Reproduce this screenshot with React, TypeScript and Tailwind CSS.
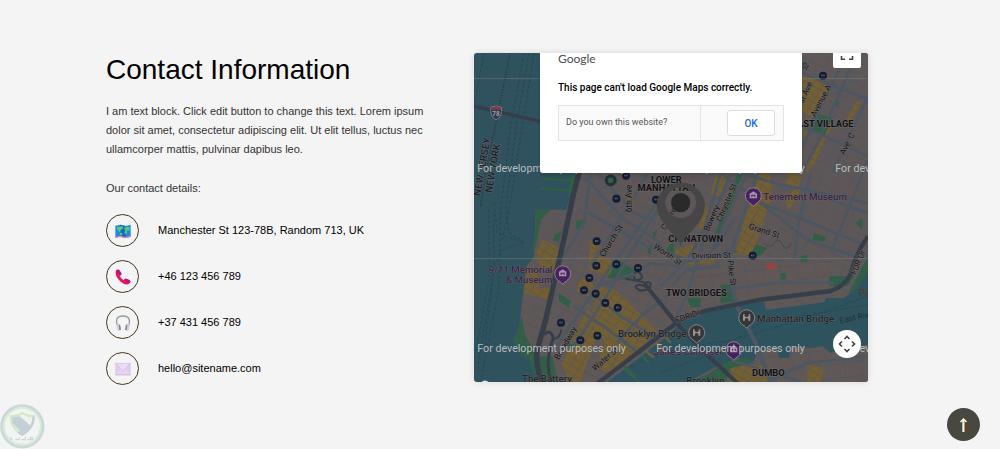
import React from "react";

const transitStops: [number, number][] = [
  [427, 437], [456, 368], [546, 440], [368, 565], [367, 638], [427, 634],
  [492, 645], [346, 675], [330, 712], [365, 722], [394, 750], [431, 764],
  [261, 809], [319, 862], [370, 848], [1047, 68], [836, 608],
];

const majorStreets = [
  "M240,890 L370,700 L600,375 L640,300",
  "M300,880 L400,725 L470,600 L560,455 L620,360",
  "M350,640 L500,400 L520,360",
  "M250,640 L330,510 L350,360",
  "M345,480 L520,580 L580,600 L640,620",
  "M335,375 L450,500 L560,570",
  "M370,360 L480,480 L540,500",
  "M370,700 L480,660 L530,630 L610,640",
  "M600,815 L640,720 L690,560 L770,360",
  "M560,700 L640,620 L690,530 L740,360",
  "M640,625 L760,603 L790,595",
  "M600,690 L640,650 L740,640",
  "M700,620 L820,360",
  "M770,600 L850,360",
  "M740,360 L860,450 L1000,505 L1182,580",
  "M800,360 L900,390 L1182,450",
  "M860,450 L1000,560 L1140,610 L1182,610",
  "M985,360 L1040,250 L1150,0",
  "M985,280 L1120,0",
  "M985,60 L1182,140",
  "M1075,360 L1182,130",
  "M985,220 L1182,310",
  "M985,410 L1182,480",
  "M960,620 L975,500 L1010,360",
  "M620,725 L700,720 L900,690 L1080,690",
  "M720,590 L780,500",
  "M1070,600 L1110,500 L1182,320",
  "M430,870 L500,790 L590,720",
  "M300,760 L390,820 L500,905",
  "M340,710 L440,790 L540,850",
  "M700,905 L800,930 L980,987",
  "M880,987 L1000,930 L1182,910",
];

const yellowBlocks = [
  "M205,560 L270,590 L255,655 L195,640 L187,600 Z",
  "M158,645 L190,650 L195,705 L242,705 L222,740 L150,720 Z",
  "M310,690 L340,665 L360,700 L345,730 L312,715 Z",
  "M380,700 L425,710 L485,770 L550,835 L480,900 L405,960 L370,945 L390,860 L345,800 Z",
  "M340,765 L380,830 L350,900 L320,985 L285,985 L262,930 L300,850 Z",
  "M345,598 L420,625 L410,670 L345,650 Z",
  "M605,590 L665,570 L650,612 L600,610 Z",
  "M640,626 L720,616 L720,628 L650,636 Z",
  "M855,362 L888,362 L895,430 L835,606 L782,606 L815,490 Z",
  "M980,70 L1060,80 L1065,130 L1020,195 L985,180 Z",
  "M985,200 L1010,215 L990,280 Z",
  "M940,362 L985,362 L975,400 L930,400 Z",
  "M725,364 L772,364 L745,430 L710,425 Z",
  "M695,460 L715,470 L690,530 L672,525 Z",
  "M1110,210 L1150,140 L1160,150 L1120,220 Z",
  "M460,440 L490,415 L475,458 Z",
  "M345,560 L390,590 L350,600 Z",
  "M935,440 L970,400 L980,412 L945,480 Z",
  "M770,940 L870,935 L880,987 L770,987 Z",
  "M1000,935 L1050,945 L1040,987 L1000,987 Z",
  "M1060,205 L1078,213 L1000,360 L988,350 Z",
  "M1025,290 L1038,296 L1020,335 L1008,330 Z",
];

const greenBlocks = [
  "M185,470 L230,470 L200,500 L190,560 L180,600 L175,590 L184,530 Z",
  "M205,372 L300,380 L300,388 L210,382 Z",
  "M198,404 L290,408 L290,416 L198,410 Z",
  "M306,362 L292,430 L284,430 L292,362 Z",
  "M142,790 L155,850 L190,910 L235,910 L250,987 L185,987 L165,920 L135,900 L122,860 Z",
  "M400,675 L430,620 L490,655 L465,680 Z",
  "M305,505 L328,500 L328,528 L308,530 Z",
  "M395,370 L425,368 L432,390 L405,400 L392,390 Z",
  "M240,545 L262,535 L255,568 L238,562 Z",
  "M790,362 L806,362 L740,545 L724,540 Z",
  "M585,575 L600,570 L600,603 L575,598 Z",
  "M535,540 L550,530 L540,560 Z",
  "M520,590 L535,570 L528,610 Z",
  "M1022,180 L1075,195 L1050,250 L1005,225 Z",
  "M845,575 L880,585 L860,607 L825,612 Z",
  "M1020,540 L1055,552 L1050,567 L1015,560 Z",
  "M980,610 L1000,605 L1000,625 L980,628 Z",
  "M1065,670 L1140,670 L1120,700 L1065,698 Z",
  "M1160,650 L1182,610 L1182,655 L1145,710 L1125,720 Z",
  "M740,695 L775,695 L780,745 L740,750 Z",
  "M640,735 L680,735 L680,762 L650,762 Z",
  "M920,660 L935,660 L935,680 L920,680 Z",
  "M1085,140 L1095,148 L1088,160 L1080,155 Z",
  "M1130,200 L1140,208 L1130,220 Z",
  "M255,720 L290,745 L285,765 L255,745 Z",
  "M640,987 L700,965 L760,925 L820,915 L840,930 L770,945 L755,987 Z",
  "M1100,880 L1170,885 L1155,898 L1100,895 Z",
  "M280,870 L305,875 L300,890 L285,888 Z",
  "M1145,510 L1165,495 L1165,530 Z",
];

const MANHATTAN =
  "M330,0 L305,370 L277,470 L185,470 L180,610 L158,640 L145,740 L135,830 L120,860 L140,900 L170,915 L185,987 L400,987 L560,865 L640,795 L690,776 L870,745 L876,771 L1050,748 L1055,735 L1110,735 L1142,710 L1165,660 L1182,645 L1182,0 Z";
const BROOKLYN =
  "M640,987 L720,945 L790,915 L840,925 L850,890 L910,885 L915,915 L945,915 L950,880 L1010,885 L1045,880 L1070,900 L1120,885 L1182,875 L1182,987 Z";
const TWO_BRIDGES = "M640,640 L1060,620 L1060,700 L870,745 L690,775 L620,760 Z";

function StreetGrid() {
  return (
    <>
      <path d={MANHATTAN} fill="url(#blocks)" />
      <path d={TWO_BRIDGES} fill="#605757" />
      <path d={TWO_BRIDGES} fill="url(#wideBlocks)" />
      <path d={BROOKLYN} fill="url(#wideBlocks)" />
    </>
  );
}

type PinProps = { x: number; y: number; color: string; bridge?: boolean };

function Pin({ x, y, color, bridge }: PinProps) {
  return (
    <g transform={`translate(${x} ${y})`}>
      <path
        d="M0,33 C-4,27 -9,25 -15,20 A24,24 0 1 1 15,20 C9,25 4,27 0,33 Z"
        fill={color}
        stroke="#8b8389"
        strokeWidth="3"
      />
      {bridge ? (
        <path d="M-11,10 V-9 H-6 V-4 Q0,2 6,-4 V-9 H11 V10 H5 V5 Q0,-1 -5,5 V10 Z" fill="#98928f" />
      ) : (
        <path
          d="M-11,-5 L0,-12 L11,-5 V9 H-11 Z M-6,-2 V5 H-3 V1 H3 V5 H6 V-2 Z"
          fill="#a692ab"
          fillRule="evenodd"
        />
      )}
    </g>
  );
}

type StreetNameProps = { x: number; y: number; angle: number; children: React.ReactNode };

function StreetName({ x, y, angle, children }: StreetNameProps) {
  return (
    <text
      transform={`translate(${x} ${y}) rotate(${angle})`}
      fontSize="25"
      fill="#0f1113"
      stroke="#6f6868"
      strokeWidth="3"
      paintOrder="stroke"
      textAnchor="middle"
      dominantBaseline="central"
    >
      {children}
    </text>
  );
}

function CityMap() {
  return (
    <svg
      viewBox="0 0 1182 987"
      className="block w-full font-[Roboto,sans-serif]"
      role="img"
      aria-label="Map of Lower Manhattan"
    >
      <defs>
        <pattern id="blocks" width="44" height="29" patternUnits="userSpaceOnUse" patternTransform="rotate(25)">
          <path d="M0,0 H44 M0,0 V29" stroke="#4c5762" strokeWidth="4" fill="none" />
        </pattern>
        <pattern id="wideBlocks" width="52" height="44" patternUnits="userSpaceOnUse" patternTransform="rotate(-7)">
          <path d="M0,0 H52 M0,0 V44" stroke="#4c5762" strokeWidth="4" fill="none" />
        </pattern>
        <pattern id="lots" width="27" height="21" patternUnits="userSpaceOnUse" patternTransform="rotate(31)">
          <path d="M0,0 H27 M0,0 V21" stroke="#565856" strokeWidth="5" fill="none" />
        </pattern>
        <clipPath id="land">
          <path d={`${MANHATTAN} ${BROOKLYN}`} />
        </clipPath>
      </defs>

      <rect width="1182" height="987" fill="#2f535e" />

      {/* Ferry routes and the state boundary */}
      <g fill="none" stroke="#23434e" strokeWidth="2" strokeDasharray="10 6">
        <path d="M30,0 L0,160 M150,0 L110,220 L80,470 L75,700 L20,987" />
        <path d="M165,0 L125,230 L95,470 L105,540 L150,565 M180,0 L145,220 L105,470 L85,560" />
        <path d="M60,450 L70,540 L150,570 L85,590 L60,640 L30,900" />
        <path d="M45,470 L45,680 L5,900 M58,480 L60,650 L10,950" />
        <path d="M470,940 Q650,870 760,865 L980,800 L1182,730 M560,960 L720,900 L860,810 L1182,755" />
      </g>
      <path d="M108,0 Q85,120 60,240 Q30,370 20,460" fill="none" stroke="#25343d" strokeWidth="4" strokeDasharray="3 5" />

      <path d={MANHATTAN} fill="#605757" />
      <path d={BROOKLYN} fill="#605757" />
      <path d="M535,850 L575,900 M500,880 L540,915 M560,835 L590,870" stroke="#6f5d34" strokeWidth="7" />
      <path d="M485,890 L525,930 M445,935 L485,970 M455,950 L495,987" stroke="#35604b" strokeWidth="7" />

      <StreetGrid />
      {yellowBlocks.map((d) => (
        <g key={d}>
          <path d={d} fill="#755f30" />
          <path d={d} fill="url(#lots)" />
        </g>
      ))}
      {greenBlocks.map((d) => (
        <path key={d} d={d} fill="#325e48" />
      ))}
      <path d="M875,637 L890,630 L908,637 V648 H875 Z" fill="#97433f" />
      <path d="M870,570 Q885,590 900,570 T925,575 T955,570" fill="none" stroke="#494749" strokeWidth="3" />

      <g fill="none" stroke="#4b5763" strokeWidth="8" strokeLinejoin="round" clipPath="url(#land)">
        {majorStreets.map((d) => (
          <path key={d} d={d} />
        ))}
      </g>
      <path d="M762,590 L776,700 L790,762 L838,855 L880,960 L895,987" fill="none" stroke="#4b5763" strokeWidth="12" />

      {/* Highways */}
      <g fill="none" stroke="#363e49" strokeLinejoin="round">
        <path d="M0,160 L200,205" strokeWidth="10" />
        <path
          d="M320,340 L297,430 L267,570 L240,690 L215,800 L190,890 Q183,930 203,987"
          strokeWidth="16"
        />
        <path d="M210,845 Q228,825 238,855 Q210,930 232,987" strokeWidth="9" />
        <path d="M235,860 Q260,855 262,830" strokeWidth="6" />
        <path
          d="M370,992 L600,815 Q640,785 700,772 L860,740 L1070,714 Q1110,702 1130,664 Q1145,600 1182,550"
          strokeWidth="13"
        />
        <path d="M510,690 L598,800 L690,897 L790,990" strokeWidth="12" />
        <path
          d="M455,677 L510,688 M480,660 Q500,650 505,675 Q480,690 480,670 M510,690 Q540,680 525,708 Q490,720 485,700 Q495,688 520,705 L595,790"
          strokeWidth="6"
        />
      </g>

      {/* Interstate shield */}
      <path d="M51,162 Q66,156 82,162 Q87,190 66,201 Q46,190 51,162 Z" fill="#2d3d54" stroke="#81757a" strokeWidth="3" />
      <path d="M52,163 Q66,158 81,163 V170 H52 Z" fill="#813f43" />
      <text x="66" y="190" fontSize="19" fontWeight="700" textAnchor="middle" fill="#a79da0">78</text>

      {transitStops.map(([x, y]) => (
        <g key={`${x}-${y}`}>
          <circle cx={x} cy={y} r="12" fill="#121c34" />
          <path d={`M${x - 5},${y - 3} h10 v5 h-10 Z`} fill="#686a72" />
          <path d={`M${x - 2},${y} h5`} stroke="#121c34" strokeWidth="2" />
        </g>
      ))}
      <circle cx="410" cy="382" r="13" fill="#35604b" stroke="#252f37" strokeWidth="9" />

      <StreetName x={466} y={436} angle={-90}>6th Ave</StreetName>
      <StreetName x={411} y={563} angle={-58}>Church St</StreetName>
      <StreetName x={582} y={604} angle={34}>Worth St</StreetName>
      <StreetName x={590} y={484} angle={-63}>Centre St</StreetName>
      <StreetName x={712} y={495} angle={-67}>Bowery</StreetName>
      <StreetName x={757} y={448} angle={-67}>Chrystie St</StreetName>
      <StreetName x={712} y={607} angle={-2}>Division St</StreetName>
      <StreetName x={774} y={660} angle={83}>Pike St</StreetName>
      <StreetName x={871} y={533} angle={18}>Grand St</StreetName>
      <StreetName x={641} y={789} angle={-18}>FDR Dr</StreetName>
      <StreetName x={1152} y={628} angle={-68}>FDR Dr</StreetName>
      <StreetName x={274} y={870} angle={-60}>Broadway</StreetName>
      <StreetName x={393} y={917} angle={-41}>Water St</StreetName>
      <StreetName x={990} y={125} angle={-65}>1st Ave</StreetName>
      <StreetName x={1040} y={143} angle={-62}>Avenue A</StreetName>
      <StreetName x={1119} y={272} angle={-62}>Ave. C</StreetName>
      <StreetName x={994} y={39} angle={30}>St</StreetName>

      <g fontSize="30" fontWeight="500" fill="#1d2126" stroke="#5f6870" strokeWidth="3" paintOrder="stroke" textAnchor="middle">
        <text transform="translate(34 343) rotate(-80)">NEW JERSEY</text>
        <text transform="translate(66 348) rotate(-80)">NEW YORK</text>
      </g>

      <g fontSize="28" fontWeight="700" fill="#101214" stroke="#706868" strokeWidth="3" paintOrder="stroke" textAnchor="middle">
        <text x="577" y="390">LOWER</text>
        <text x="577" y="415">MANHATTAN</text>
        <text x="665" y="568">CHINATOWN</text>
        <text x="667" y="730">TWO BRIDGES</text>
        <text x="1046" y="221">EAST VILLAGE</text>
        <text x="883" y="970">DUMBO</text>
      </g>

      <g fontSize="29" fontWeight="500" fill="#372341" stroke="#746d74" strokeWidth="2" paintOrder="stroke">
        <text x="868" y="441">Tenement Museum</text>
        <text x="235" y="661" textAnchor="end">9/11 Memorial</text>
        <text x="235" y="690" textAnchor="end">&amp; Museum</text>
        <text x="540" y="906">Jane's Carousel</text>
      </g>
      <g fontSize="29" fontWeight="500" fill="#202327" stroke="#6b6d6d" strokeWidth="2" paintOrder="stroke">
        <text x="432" y="853">Brooklyn Bridge</text>
        <text x="849" y="807">Manhattan Bridge</text>
        <text x="144" y="986">The Battery</text>
        <text x="637" y="992">Brooklyn</text>
      </g>
      <text x="1155" y="728" fontSize="28" fill="#622f24">Pe</text>
      <text transform="translate(1099 812) rotate(-13)" fontSize="25" fill="#17323c">East River</text>

      <Pin x={838} y={427} color="#482260" />
      <Pin x={266} y={661} color="#482260" />
      <Pin x={779} y={889} color="#482260" />
      <Pin x={668} y={838} color="#353638" bridge />
      <Pin x={818} y={793} color="#353638" bridge />

      {/* Location marker */}
      <path
        d="M620,579 C615,548 548,515 548,453 A73,73 0 0 1 693,453 C693,515 626,548 620,579 Z M620,403 A46,46 0 1 0 620,495 A46,46 0 1 0 620,403 Z"
        fill="#464646"
        fillRule="evenodd"
      />
      <circle cx="620" cy="449" r="29" fill="#2b2b2b" />

      <path d="M0,77 H1182 M0,617 H1182" stroke="#81898c" strokeWidth="2" opacity=".7" />
      <g fontSize="32" fill="#b8bdbf">
        <text x="10" y="358">For development purposes only</text>
        <text x="547" y="358">For development purposes only</text>
        <text x="1084" y="358">For development purposes only</text>
        <text x="10" y="896">For development purposes only</text>
        <text x="547" y="896">For development purposes only</text>
        <text x="1084" y="896">For development purposes only</text>
      </g>
      <path d="M22,987 Q33,978 44,987 Z" fill="#e8e8e8" />
    </svg>
  );
}

function MapIcon() {
  return (
    <svg viewBox="0 0 48 48" className="size-4" aria-hidden="true">
      <path d="M1,8 L16,5 L32,9 L47,5 V41 L32,45 L16,41 L1,44 Z" fill="#2786e5" />
      <path d="M16,5 L32,9 V45 L16,41 Z" fill="#1b65c9" />
      <path d="M5,13 L22,10 L25,16 L17,21 L15,28 L8,22 Z M16,29 L23,31 L19,39 L14,34 Z" fill="#53cf70" />
      <path d="M27,16 L34,11 L45,13 L42,23 L36,22 L35,36 L28,29 L31,22 Z" fill="#43cf7a" />
      <path d="M1,41 L16,38 L32,42 L47,38 V42 L32,46 L16,42 L1,45 Z" fill="#d68ca8" />
    </svg>
  );
}

function PhoneIcon() {
  return (
    <svg viewBox="0 0 48 48" className="size-4" aria-hidden="true">
      <path
        d="M4,3 Q10,-1 15,5 L20,14 Q21,18 14,21 Q18,29 26,34 Q29,27 34,29 L44,34 Q49,38 44,43 Q33,52 17,38 Q-4,18 4,3 Z"
        fill="#e91563"
      />
      <path d="M5,3 Q10,0 14,6 L19,14 L13,18 L4,7 Z M35,29 L44,34 Q48,38 44,42 L32,35 Z" fill="#b31581" />
    </svg>
  );
}

function HeadphonesIcon() {
  return (
    <svg viewBox="0 0 48 48" className="size-4" fill="none" aria-hidden="true">
      <path d="M7,32 Q-2,3 24,3 Q50,3 41,32" stroke="#9b99a2" strokeWidth="4" />
      <path d="M4,30 Q8,24 16,29 L18,44 Q12,50 6,44 Z M44,30 Q40,24 32,29 L30,44 Q36,50 42,44 Z" fill="#d2d0d8" />
      <path d="M15,29 L18,44 L13,46 L11,29 Z M33,29 L30,44 L35,46 L37,29 Z" fill="#858290" />
    </svg>
  );
}

function MailIcon() {
  return (
    <svg viewBox="0 0 48 48" className="size-4" aria-hidden="true">
      <path d="M1,7 H47 V42 H1 Z" fill="#dfc9ec" />
      <path d="M1,42 L18,22 H30 L47,42 Z" fill="#e9d5f1" />
      <path d="M1,7 H47 L26,28 Q24,30 22,28 Z" fill="#eadcf3" stroke="#c7b1d8" strokeWidth="1.5" />
      <path d="M1,40 H47 V43 H1 Z" fill="#d4b6df" />
    </svg>
  );
}

const contacts = [
  { icon: <MapIcon />, label: "Manchester St 123-78B, Random 713, UK" },
  { icon: <PhoneIcon />, label: "+46 123 456 789" },
  { icon: <HeadphonesIcon />, label: "+37 431 456 789" },
  { icon: <MailIcon />, label: "hello@sitename.com" },
];

function ContactInformation() {
  return (
    <div className="max-w-[320px] text-[11px] leading-[19px] text-[#333]">
      <h2 className="text-[28px] leading-[34px] whitespace-nowrap text-black">Contact Information</h2>
      <p className="mt-[15px]">
        I am text block. Click edit button to change this text. Lorem ipsum dolor sit amet,
        consectetur adipiscing elit. Ut elit tellus, luctus nec ullamcorper mattis, pulvinar
        dapibus leo.
      </p>
      <p className="mt-5">Our contact details:</p>
      <ul className="mt-4 flex flex-col gap-[13px] text-black">
        {contacts.map(({ icon, label }) => (
          <li key={label} className="flex items-center gap-[19px]">
            <span className="flex size-[33px] shrink-0 items-center justify-center rounded-full border border-[#43351b]">
              {icon}
            </span>
            {label}
          </li>
        ))}
      </ul>
    </div>
  );
}

function MapDialog() {
  return (
    <div
      role="dialog"
      aria-label="Google Maps notice"
      className="absolute inset-x-0 top-0 mx-auto h-[120px] w-[262px] rounded-b-[3px] bg-white px-[18px] font-[Roboto,sans-serif] shadow-md"
    >
      <div className="h-[27px] font-[Lato,sans-serif] text-[12px] leading-[11px] text-[#4a4d51]">Google</div>
      <p className="text-[10px] leading-4 font-medium whitespace-nowrap text-black">
        This page can't load Google Maps correctly.
      </p>
      <div className="mt-[9px] flex h-9 items-center border border-[#e3e3e3] bg-[#fafafa]">
        <span className="flex h-full flex-1 items-center border-r border-[#e3e3e3] pl-[7px] text-[9px] text-[#555]">
          Do you own this website?
        </span>
        <span className="flex w-[82px] justify-end pr-2">
          <button
            type="button"
            className="h-[26px] w-12 rounded-[3px] border border-[#dadce0] bg-white text-[10px] font-medium text-[#1a66e8]"
          >
            OK
          </button>
        </span>
      </div>
    </div>
  );
}

function MapPanel() {
  return (
    <div className="relative overflow-hidden rounded-[3px] shadow-[0_0_6px_rgba(0,0,0,0.12)]">
      <CityMap />
      <MapDialog />
      <button
        type="button"
        aria-label="Toggle fullscreen view"
        className="absolute top-0 right-[7px] flex h-[15px] w-7 items-start justify-center rounded-b-[2px] bg-white"
      >
        <svg viewBox="0 0 14 8" className="h-2 w-3.5" fill="none" aria-hidden="true">
          <path d="M1.5,3 V6.2 H5 M9,6.2 H12.5 V3" stroke="#444" strokeWidth="1.6" />
        </svg>
      </button>
      <button
        type="button"
        aria-label="Map camera controls"
        className="absolute right-[7px] bottom-6 flex size-7 items-center justify-center rounded-full bg-white"
      >
        <svg viewBox="0 0 18 18" className="size-[18px]" fill="none" aria-hidden="true">
          <path
            d="M6.5,4 L9,1.5 L11.5,4 M6.5,14 L9,16.5 L11.5,14 M4,6.5 L1.5,9 L4,11.5 M14,6.5 L16.5,9 L14,11.5"
            stroke="#444"
            strokeWidth="1.7"
          />
        </svg>
      </button>
    </div>
  );
}

function ShieldBadge() {
  return (
    <svg viewBox="0 0 135 135" className="fixed bottom-0 left-0 size-[45px]" aria-hidden="true">
      <circle cx="67" cy="67" r="62" fill="#f1f4f2" stroke="#c9d8d9" strokeWidth="9" />
      <circle cx="67" cy="67" r="55" fill="none" stroke="#dbebd2" strokeWidth="5" />
      <path d="M67,24 Q84,34 104,34 Q108,72 67,96 Q26,72 30,34 Q52,34 67,24 Z" fill="#d4e6c2" />
      <path d="M67,31 Q82,40 97,40 Q99,68 67,88 Q35,68 37,40 Q52,40 67,31 Z" fill="#eef3ef" />
      <path d="M37,40 Q50,40 58,36 L93,66 Q84,80 67,89 L37,56 Z" fill="#c3d0d6" />
      <path d="M104,34 Q108,72 67,96 Q58,91 51,85 L62,82 L67,88 Q99,68 97,40 Z" fill="#c3d0d6" />
      <path d="M33,99 V107 H38 M46,107 H58 V101 M64,107 H76 V98 M82,107 H98 V101 H90 V107" fill="none" stroke="#c3d0d6" strokeWidth="3" />
    </svg>
  );
}

export default function App() {
  return (
    <main className="min-h-screen bg-[#f4f4f4] font-['Liberation_Sans',Arial,sans-serif]">
      <section className="grid grid-cols-[368fr_394fr] items-start pt-[53px] pr-[13.2%] pb-12 pl-[10.6%]">
        <ContactInformation />
        <MapPanel />
      </section>
      <ShieldBadge />
      <a
        href="#root"
        aria-label="Back to top"
        className="fixed right-5 bottom-2 flex size-[33px] items-center justify-center rounded-full bg-[#484740]"
      >
        <svg viewBox="0 0 9 16" className="h-4 w-[9px]" fill="none" aria-hidden="true">
          <path d="M3.5,4 V15" stroke="#8ecbe8" strokeWidth="1" />
          <path d="M5.5,4 V15" stroke="#e98a38" strokeWidth="1" />
          <path d="M4.5,2 V15" stroke="#fff0d8" strokeWidth="1" />
          <path d="M1.5,5 L4.5,2 L7.5,5" stroke="#fff" strokeWidth="1.4" />
        </svg>
      </a>
    </main>
  );
}
